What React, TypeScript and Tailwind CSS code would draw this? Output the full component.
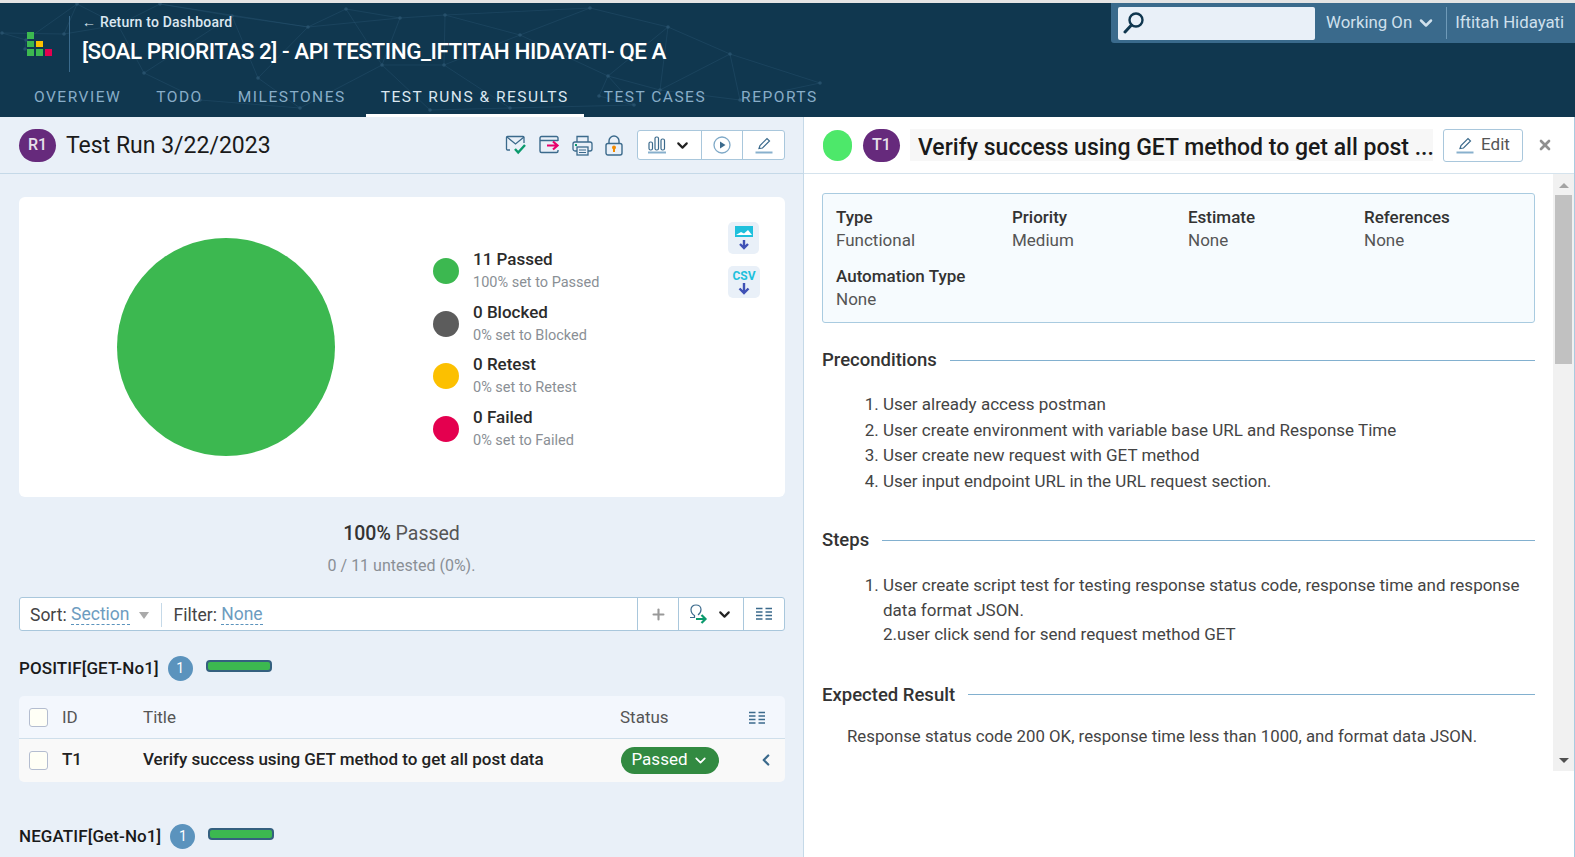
import { ChevronDown, ChevronLeft, Plus, X } from 'lucide-react';

const FONT = 'font-[Roboto,"Liberation_Sans",sans-serif]';

const tabs = ['OVERVIEW', 'TODO', 'MILESTONES', 'TEST RUNS & RESULTS', 'TEST CASES', 'REPORTS'];

const legend = [
  { title: '11 Passed', sub: '100% set to Passed', dot: 'bg-[#3cb850]' },
  { title: '0 Blocked', sub: '0% set to Blocked', dot: 'bg-[#5c5c5c]' },
  { title: '0 Retest', sub: '0% set to Retest', dot: 'bg-[#fcc000]' },
  { title: '0 Failed', sub: '0% set to Failed', dot: 'bg-[#e4004f]' },
];

const nodes: [number, number][] = [
  [2, 33], [26, 40], [25, 49], [64, 34], [77, 4], [118, 25], [144, 73], [160, 4], [232, 16], [258, 78],
  [308, 27], [346, 9], [400, 18], [445, 15], [382, 65], [444, 65], [520, 35], [590, 8], [668, 27], [730, 54],
  [608, 76], [634, 105], [599, 96], [510, 108], [430, 110], [820, 83], [740, 100], [660, 90], [300, 108], [200, 100],
];

const links: [number, number][] = [
  [0, 1], [0, 3], [1, 2], [1, 4], [3, 4], [3, 5], [4, 5], [5, 6], [5, 7], [6, 8], [7, 8], [8, 9], [8, 10], [9, 10], [10, 11],
  [11, 12], [12, 13], [12, 14], [13, 15], [14, 15], [13, 16], [15, 16], [16, 17], [17, 18], [18, 19], [16, 20], [20, 21], [21, 22],
  [20, 22], [15, 23], [14, 24], [23, 24], [19, 25], [19, 26], [26, 25], [18, 27], [27, 26], [20, 27], [9, 28], [28, 14], [6, 29], [29, 28],
  [7, 10], [11, 14], [10, 12], [17, 13], [18, 20], [19, 27], [23, 21],
];

function NetworkBg() {
  return (
    <svg className="absolute left-0 top-0 h-[114px] w-[840px]" viewBox="0 3 840 114" fill="none">
      {links.map(([a, b]) => (
        <line key={`${a}-${b}`} x1={nodes[a][0]} y1={nodes[a][1]} x2={nodes[b][0]} y2={nodes[b][1]} stroke="#2a5570" strokeWidth="0.7" opacity="0.6" />
      ))}
      {nodes.map(([x, y]) => (
        <circle key={`${x}-${y}`} cx={x} cy={y} r="1.8" fill="#2a5570" opacity="0.8" />
      ))}
    </svg>
  );
}

function Logo() {
  return (
    <div className="grid h-[24px] w-[25px] grid-cols-3 grid-rows-3 gap-[2px]">
      <span className="bg-[#3cb850]" />
      <span />
      <span />
      <span className="bg-[#3cb850]" />
      <span className="bg-[#fcc000]" />
      <span />
      <span className="bg-[#3cb850]" />
      <span className="bg-[#3cb850]" />
      <span className="bg-[#e4004f]" />
    </div>
  );
}

function SearchGlyph() {
  return (
    <svg width="22" height="24" viewBox="0 0 22 24" fill="none" stroke="#10374f" strokeWidth="2.4">
      <circle cx="13" cy="9" r="6.5" />
      <path d="M8.5 14 2 21" strokeWidth="3" strokeLinecap="round" />
    </svg>
  );
}

function MailCheck() {
  return (
    <svg width="22" height="22" viewBox="0 0 22 22" fill="none">
      <path d="M5 16H2.5A1 1 0 0 1 1.5 15V3.5a1 1 0 0 1 1-1H18a1 1 0 0 1 1 1V9" stroke="#3b6a8c" strokeWidth="1.3" />
      <path d="m2 3 8.5 7L19 3" stroke="#3b6a8c" strokeWidth="1.3" />
      <path d="m10 15 3.2 3.5L20 11" stroke="#0b9a6d" strokeWidth="2.4" />
    </svg>
  );
}

function ExportBox() {
  return (
    <svg width="21" height="20" viewBox="0 0 21 20" fill="none">
      <path d="M19 6V3a1.5 1.5 0 0 0-1.5-1.5h-15A1.5 1.5 0 0 0 1 3v13a1.5 1.5 0 0 0 1.5 1.5h15A1.5 1.5 0 0 0 19 16v-1M1 5.5h18" stroke="#3b6a8c" strokeWidth="1.4" />
      <path d="M8 10.5h10M14 6.5l4.5 4-4.5 4" stroke="#e8006b" strokeWidth="2.2" />
    </svg>
  );
}

function Printer() {
  return (
    <svg width="21" height="21" viewBox="0 0 21 21" fill="none" stroke="#3b6a8c" strokeWidth="1.3">
      <path d="M5 7V1.5h11V7" />
      <rect x="1" y="7" width="19" height="9" rx="2" />
      <rect x="5" y="12" width="11" height="8" fill="#e9f0f8" />
      <path d="M7 15h7M7 17.5h7" strokeWidth="1" />
      <rect x="3" y="9" width="2" height="2" fill="#0b9a6d" stroke="none" />
    </svg>
  );
}

function Lock() {
  return (
    <svg width="18" height="21" viewBox="0 0 18 21" fill="none">
      <path d="M4 9V6a5 5 0 0 1 10 0v3" stroke="#3b6a8c" strokeWidth="1.4" />
      <rect x="1" y="8.5" width="16" height="11.5" rx="2" stroke="#3b6a8c" strokeWidth="1.4" />
      <circle cx="9" cy="12.5" r="2" fill="#f28a00" />
      <path d="M9 13v4" stroke="#f28a00" strokeWidth="2" />
    </svg>
  );
}

function Bars() {
  return (
    <svg width="18" height="18" viewBox="0 0 18 18" fill="none" stroke="#3b6a8c" strokeWidth="1.2">
      <rect x="1" y="6" width="3.5" height="8" rx="1.5" />
      <rect x="7" y="1" width="3.5" height="13" rx="1.5" />
      <rect x="13" y="3" width="3.5" height="11" rx="1.5" />
      <path d="M0 16.5h18" stroke="#88b0cd" strokeWidth="2" />
    </svg>
  );
}

function PlayRing() {
  return (
    <svg width="18" height="18" viewBox="0 0 18 18" fill="none">
      <circle cx="9" cy="9" r="8" stroke="#7fa9c7" strokeWidth="1.3" />
      <path d="M7 5.5v7l5.5-3.5z" fill="#3b6a8c" />
    </svg>
  );
}

function Pencil() {
  return (
    <svg width="18" height="18" viewBox="0 0 18 18" fill="none">
      <path d="M4 12.5 5 9.5 12 2.5l2.5 2.5-7 7z" stroke="#3b6a8c" strokeWidth="1.2" />
      <path d="M0.5 16.5h17" stroke="#88b0cd" strokeWidth="2" />
    </svg>
  );
}

function ChartDownload() {
  return (
    <svg width="20" height="24" viewBox="0 0 20 24" fill="none">
      <rect x="1" y="0" width="18" height="11" fill="#1fc0dc" />
      <path d="M2 9l5-3 3 1.5L14 4l4 5z" fill="#fff" />
      <path d="M10 14v8M6 18l4 4 4-4" stroke="#3f51b5" strokeWidth="2.4" />
    </svg>
  );
}

function CsvDownload() {
  return (
    <div className="flex flex-col items-center">
      <span className="text-[12px] font-bold leading-[12px] text-[#1fc0dc]">CSV</span>
      <svg width="14" height="13" viewBox="0 0 14 13" fill="none">
        <path d="M7 1v10M2.5 6.5 7 11l4.5-4.5" stroke="#3f51b5" strokeWidth="2.4" />
      </svg>
    </div>
  );
}

function Columns() {
  return (
    <svg width="16" height="14" viewBox="0 0 16 14" fill="none" stroke="#3b6a8c" strokeWidth="1.3">
      <path d="M0 1.5h6.5M9.5 1.5H16M0 5h6.5M9.5 5H16M0 8.5h6.5M9.5 8.5H16M0 12h6.5M9.5 12H16" />
    </svg>
  );
}

function AssignArrow() {
  return (
    <svg width="19" height="20" viewBox="0 0 19 20" fill="none">
      <path d="M1 13.5h4.5v-2C3 10 2 7.5 2 5.5 2 3 4 1 7 1s5 2 5 4.5c0 2-1 4-3 5.5" stroke="#3b6a8c" strokeWidth="1.2" />
      <path d="M7 15h9M12.5 11l4 4-4 4" stroke="#0b9a6d" strokeWidth="2.2" />
    </svg>
  );
}

function Avatar({ label }: { label: string }) {
  return (
    <div className="flex h-[33px] w-[37px] shrink-0 items-center justify-center rounded-full bg-[#662a7c] text-[16px] font-medium text-[#e6e0ea]">
      {label}
    </div>
  );
}

function Checkbox() {
  return <span className="block h-[19px] w-[19px] shrink-0 rounded-[3px] border border-[#b4bdd0] bg-[#fffff6]" />;
}

function SectionTitle({ title }: { title: string }) {
  return (
    <div className="flex items-center">
      <span className="text-[17px] font-medium tracking-[0.1px] text-[#1a1a1a]">{title}</span>
      <span className="ml-[9px] flex h-[25px] w-[25px] items-center justify-center rounded-full bg-[#5b93bd] text-[14px] text-white">1</span>
      <span className="mb-[5px] ml-[13px] block h-[12px] w-[66px] rounded-[4px] border-2 border-[#34607f] bg-[#3cb850]" />
    </div>
  );
}

function Heading({ title }: { title: string }) {
  return (
    <div className="flex items-center gap-[13px]">
      <span className="text-[18.5px] font-medium leading-[26px] text-[#333]">{title}</span>
      <span className="h-px flex-1 bg-[#82b0cf]" />
    </div>
  );
}

export default function App() {
  return (
    <div className={`${FONT} flex h-[857px] w-[1575px] flex-col overflow-hidden border-t-[3px] border-[#e4e4e4] bg-white`}>
      <header className="relative h-[114px] shrink-0 bg-[#10374f]">
        <NetworkBg />
        <div className="relative flex h-[79px]">
          <div className="flex items-end pb-[26px] pl-[27px] pr-[17px]">
            <Logo />
          </div>
          <div className="mt-[13px] h-[56px] w-px bg-[#3a6a8c]" />
          <div className="ml-[12px]">
            <div className="mt-[10px] text-[14px] font-medium leading-[18px] tracking-[0.2px] text-[#dbe7f1]">← Return to Dashboard</div>
            <div className="mt-[4px] text-[22.5px] font-medium leading-[32px] tracking-[-0.5px] text-white">[SOAL PRIORITAS 2] - API TESTING_IFTITAH HIDAYATI- QE A</div>
          </div>
          <div className="ml-auto flex h-[40px] w-[464px] items-center rounded-bl-[3px] bg-[#3a6a8c] pl-[7px] text-[16.8px] text-[#cfe0ec]">
            <div className="flex h-[33px] w-[197px] items-center rounded-[2px] bg-[#e9f0f8] pl-[5px]">
              <SearchGlyph />
            </div>
            <span className="ml-[11px]">Working On</span>
            <ChevronDown className="ml-[4px] h-[20px] w-[20px]" strokeWidth={3} />
            <span className="ml-[10px] h-[32px] w-px bg-[#6f9ab8]" />
            <span className="ml-[8px]">Iftitah Hidayati</span>
          </div>
        </div>
        <nav className="relative flex h-[35px] pl-[19px] text-[15.5px] tracking-[1.5px] text-[#88adc8]">
          {tabs.map((tab) => {
            const aktif = tab === 'TEST RUNS & RESULTS';
            return (
              <span
                key={tab}
                className={`mr-[5px] border-b-[3px] px-[15px] pt-[5px] leading-[20px] ${aktif ? 'border-white text-[#dbe7f1]' : 'border-transparent'}`}
              >
                {tab}
              </span>
            );
          })}
        </nav>
      </header>

      <div className="flex min-h-0 flex-1">
        <main className="w-[804px] shrink-0 border-r border-[#c5d9e8] bg-[#e9f0f8]">
          <div className="flex h-[57px] items-center border-b border-[#c5d9e8] pl-[19px] pr-[18px]">
            <Avatar label="R1" />
            <h1 className="ml-[10px] pt-[3px] text-[23px] text-[#1a1a1a]">Test Run 3/22/2023</h1>
            <div className="ml-auto flex items-center gap-[12px]">
              <MailCheck />
              <ExportBox />
              <Printer />
              <Lock />
            </div>
            <div className="ml-[14px] flex h-[30px] items-stretch rounded-[3px] border border-[#a9c7dc] bg-white">
              <span className="flex w-[64px] items-center justify-center gap-[8px] border-r border-[#a9c7dc]">
                <Bars />
                <ChevronDown className="h-[17px] w-[17px] text-[#222]" strokeWidth={3} />
              </span>
              <span className="flex w-[41px] items-center justify-center border-r border-[#a9c7dc]"><PlayRing /></span>
              <span className="flex w-[41px] items-center justify-center"><Pencil /></span>
            </div>
          </div>

          <div className="px-[18px] pt-[23px]">
            <section className="relative ml-px flex h-[300px] rounded-[6px] bg-white">
              <div className="ml-[98px] mt-[41px] h-[218px] w-[218px] rounded-full bg-[#3cb850]" />
              <div className="ml-[98px] mt-[52px] flex flex-col gap-[8px]">
                {legend.map((item) => (
                  <div key={item.title} className="flex h-[44.5px] items-center">
                    <span className={`h-[26px] w-[26px] rounded-full ${item.dot}`} />
                    <div className="ml-[14px]">
                      <div className="text-[17px] font-medium leading-[22px] text-[#2b2b2b]">{item.title}</div>
                      <div className="pt-[2px] text-[14.5px] leading-[22px] text-[#8a8f95]">{item.sub}</div>
                    </div>
                  </div>
                ))}
              </div>
              <div className="absolute left-[709px] top-[25px] flex flex-col gap-[12px]">
                <span className="flex h-[32px] w-[31px] items-center justify-center rounded-[5px] bg-[#e9f0f8]"><ChartDownload /></span>
                <span className="flex h-[32px] w-[32px] items-center justify-center rounded-[5px] bg-[#e9f0f8]"><CsvDownload /></span>
              </div>
            </section>

            <div className="mt-[23px] text-center text-[19.5px] leading-[28px] text-[#555]">
              <b className="font-medium text-[#333]">100%</b> Passed
            </div>
            <div className="mt-[7px] text-center text-[16px] leading-[22px] text-[#8a8f95]">0 / 11 untested (0%).</div>

            <div className="ml-px mt-[20px] flex h-[34px] items-stretch rounded-[3px] border border-[#a9c7dc] bg-white text-[17.5px] text-[#444]">
              <div className="flex flex-1 items-center pl-[10px] pt-[2px]">
                <span>Sort:&nbsp;</span>
                <span className="border-b border-dashed border-[#5b93bd] leading-[19px] text-[#6d9cc0]">Section</span>
                <span className="ml-[9px] h-0 w-0 border-x-[5px] border-t-[7px] border-x-transparent border-t-[#aaa]" />
                <span className="ml-[12px] mr-[12px] h-[24px] w-px bg-[#c5d9e8]" />
                <span>Filter:&nbsp;</span>
                <span className="border-b border-dashed border-[#5b93bd] leading-[19px] text-[#6d9cc0]">None</span>
              </div>
              <span className="flex w-[41px] items-center justify-center border-l border-[#a9c7dc]">
                <Plus className="h-[17px] w-[17px] text-[#999]" strokeWidth={3} />
              </span>
              <span className="flex w-[65px] items-center justify-center gap-[8px] border-l border-[#a9c7dc]">
                <AssignArrow />
                <ChevronDown className="h-[17px] w-[17px] text-[#222]" strokeWidth={3} />
              </span>
              <span className="flex w-[41px] items-center justify-center border-l border-[#a9c7dc]"><Columns /></span>
            </div>

            <div className="ml-px mt-[25px]">
              <SectionTitle title="POSITIF[GET-No1]" />
            </div>

            <div className="ml-px mt-[14px] overflow-hidden rounded-[5px]">
              <div className="flex h-[43px] items-center border-b border-[#cfdfeb] bg-[#f3f7fd] pt-[2px] text-[17px] text-[#555]">
                <span className="ml-[10px]"><Checkbox /></span>
                <span className="ml-[14px] w-[81px]">ID</span>
                <span className="flex-1">Title</span>
                <span className="w-[129px]">Status</span>
                <span className="mr-[20px]"><Columns /></span>
              </div>
              <div className="flex h-[43px] items-center bg-[#f9f9f9] text-[17px]">
                <span className="ml-[10px]"><Checkbox /></span>
                <span className="ml-[14px] w-[81px] font-medium text-[#222]">T1</span>
                <span className="flex-1 font-medium text-[#222]">Verify success using GET method to get all post data</span>
                <span className="flex h-[27px] w-[98px] items-center justify-center gap-[4px] rounded-full bg-[#328a41] text-[17px] text-white">
                  Passed
                  <ChevronDown className="h-[17px] w-[17px]" strokeWidth={2.5} />
                </span>
                <ChevronLeft className="ml-[38px] mr-[10px] h-[18px] w-[18px] text-[#3b6a8c]" strokeWidth={3} />
              </div>
            </div>

            <div className="ml-px mt-[42px]">
              <SectionTitle title="NEGATIF[Get-No1]" />
            </div>
          </div>
        </main>

        <aside className="flex min-w-0 flex-1 flex-col border-r border-[#a9cbe0]">
          <div className="flex h-[57px] shrink-0 items-center border-b border-[#d5e3ed] pl-[19px]">
            <span className="h-[31px] w-[29px] shrink-0 rounded-full bg-[#4de86a]" />
            <span className="ml-[11px]"><Avatar label="T1" /></span>
            <div className="ml-[10px] h-[32px] w-[523px] overflow-hidden whitespace-nowrap bg-[#f7f7f7] pl-[8px] text-[23px] font-medium leading-[37px] text-[#1a1a1a]">
              Verify success using GET method to get all post ...
            </div>
            <span className="ml-[10px] flex h-[33px] w-[80px] items-center justify-center gap-[7px] rounded-[3px] border border-[#a9c7dc] text-[17px] text-[#555]">
              <Pencil />
              Edit
            </span>
            <X className="ml-[14px] h-[16px] w-[16px] text-[#8f8f8f]" strokeWidth={4} />
          </div>

          <div className="flex h-[597px] shrink-0">
            <div className="min-w-0 flex-1 overflow-hidden pl-[18px] pr-[18px] pt-[19px] text-[17px] text-[#444]">
              <div className="grid h-[130px] grid-cols-[176px_176px_176px_1fr] content-start gap-y-[13px] rounded-[3px] border border-[#a9cbe0] bg-[#f6fbfe] pl-[13px] pt-[12px]">
                {[['Type', 'Functional'], ['Priority', 'Medium'], ['Estimate', 'None'], ['References', 'None'], ['Automation Type', 'None']].map(([k, v]) => (
                  <div key={k} className="leading-[23px]">
                    <div className="font-medium text-[#333]">{k}</div>
                    <div className="text-[#555]">{v}</div>
                  </div>
                ))}
              </div>

              <div className="mt-[24px]"><Heading title="Preconditions" /></div>
              <ol className="ml-[44px] mt-[19px] list-decimal pl-[17px] leading-[25.6px]">
                <li>User already access postman</li>
                <li>User create environment with variable base URL and Response Time</li>
                <li>User create new request with GET method</li>
                <li>User input endpoint URL in the URL request section.</li>
              </ol>

              <div className="mt-[33px]"><Heading title="Steps" /></div>
              <ol className="ml-[44px] mt-[20px] list-decimal pl-[17px] leading-[24.5px]">
                <li>
                  User create script test for testing response status code, response time and response data format JSON.
                  <br />
                  2.user click send for send request method GET
                </li>
              </ol>

              <div className="mt-[35px]"><Heading title="Expected Result" /></div>
              <p className="mt-[16px] pl-[25px] text-[16.8px] leading-[25px]">Response status code 200 OK, response time less than 1000, and format data JSON.</p>
            </div>

            <div className="flex w-[21px] shrink-0 flex-col items-center bg-[#f1f1f1] px-[2px]">
              <span className="mt-[9px] h-0 w-0 border-x-[5px] border-b-[5px] border-x-transparent border-b-[#a3a3a3]" />
              <span className="mt-[7px] h-[169px] w-full bg-[#c1c1c1]" />
              <span className="mb-[8px] mt-auto h-0 w-0 border-x-[5px] border-t-[5px] border-x-transparent border-t-[#505050]" />
            </div>
          </div>
        </aside>
      </div>
    </div>
  );
}
